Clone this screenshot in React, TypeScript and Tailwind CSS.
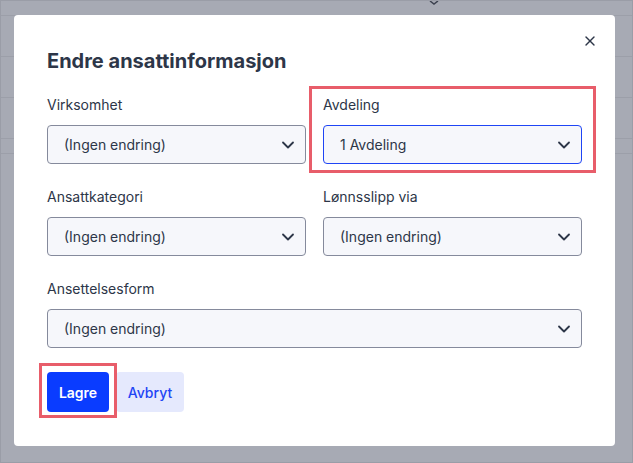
import { X, ChevronDown } from 'lucide-react';

function SelectField({ label, value, active }: { label: string; value: string; active?: boolean }) {
  return (
    <div className="flex flex-col">
      <label className="mb-[10px] text-[14px] leading-5 text-[#2d3648]">{label}</label>
      <div
        className={
          active
            ? 'flex h-[39px] items-center justify-between rounded-[4px] border border-[#1f45f5] bg-[#f6f7fb] pl-4 pr-[7px]'
            : 'flex h-[39px] items-center justify-between rounded-[4px] border border-[#858a9c] bg-[#f6f7fb] pl-4 pr-[7px]'
        }
      >
        <span className="text-[14px] text-[#2d3648]">{value}</span>
        <ChevronDown size={20} strokeWidth={2.2} className="text-[#2d3648]" />
      </div>
    </div>
  );
}

export default function App() {
  return (
    <div
      className="relative h-[463px] w-full overflow-hidden border border-[#9a9da7] bg-[#a7aab4]"
      style={{ fontFamily: 'Inter, "Noto Sans", sans-serif' }}
    >
      {/* dimmed page behind the dialog */}
      <div className="flex flex-col">
        <div className="h-[15px] border-b border-[#9c9fa9]" />
        <div className="h-[41px] border-b border-[#9c9fa9]" />
        <div className="h-[41px] border-b border-[#9c9fa9]" />
        <div className="h-[41px] border-b border-[#9c9fa9]" />
        <div className="h-[15px] border-b border-[#9c9fa9]" />
      </div>
      <svg className="absolute left-[428px] top-0" width="10" height="4" viewBox="0 0 10 4">
        <path d="M1 0 L5 3 L9 0" fill="none" stroke="#3d4250" strokeWidth="1.5" />
      </svg>

      <div className="absolute left-[13px] top-[14px] h-[431px] w-[601px] rounded-[4px] bg-white px-[33px] pt-[32px]">
        <button className="absolute right-[17px] top-[18px] text-[#2d3648]">
          <X size={16} strokeWidth={2} />
        </button>

        <h2 className="text-[20px] font-bold leading-7 text-[#2d3648]">Endre ansattinformasjon</h2>

        <div className="mt-[20px] grid grid-cols-2 gap-x-[17px] gap-y-[23px]">
          <SelectField label="Virksomhet" value="(Ingen endring)" />
          <div className="relative">
            <span className="pointer-events-none absolute -bottom-[9px] -left-[14px] -right-[14px] -top-[9px] border-[3px] border-[#e85d6a]" />
            <SelectField label="Avdeling" value="1 Avdeling" active />
          </div>
          <SelectField label="Ansattkategori" value="(Ingen endring)" />
          <SelectField label="Lønnsslipp via" value="(Ingen endring)" />
          <div className="col-span-2">
            <SelectField label="Ansettelsesform" value="(Ingen endring)" />
          </div>
        </div>

        <div className="mt-[24px] flex gap-[7px]">
          <div className="relative">
            <span className="pointer-events-none absolute -bottom-[6px] -left-[8px] -right-[8px] -top-[9px] border-[3px] border-[#e85d6a]" />
            <button className="flex h-[40px] w-[62px] items-center justify-center rounded-[4px] bg-[#0a3cff] text-[14px] font-semibold text-white">
              Lagre
            </button>
          </div>
          <button className="flex h-[40px] w-[68px] items-center justify-center rounded-[4px] bg-[#e5e9fd] text-[14px] font-medium text-[#1f45f5]">
            Avbryt
          </button>
        </div>
      </div>
    </div>
  );
}
